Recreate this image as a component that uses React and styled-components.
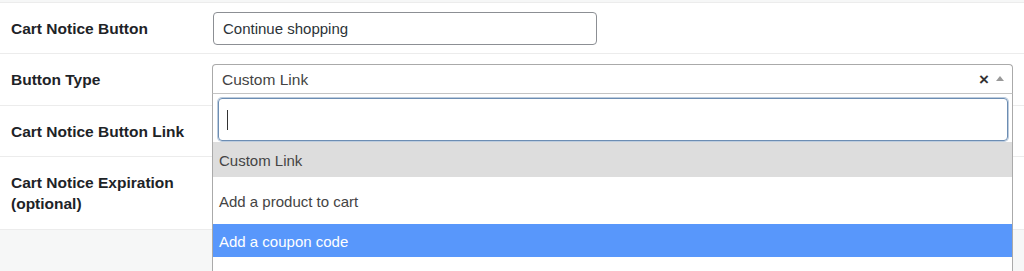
import React from "react";
import styled, { createGlobalStyle } from "styled-components";

const GlobalStyle = createGlobalStyle`
  html, body {
    margin: 0;
    padding: 0;
    background: #f6f7f7;
    overflow: hidden;
  }
  body {
    font-family: "Liberation Sans", Arial, sans-serif;
    color: #1d2327;
  }
`;

const options = [
  { label: "Custom Link", state: "selected", height: 35 },
  { label: "Add a product to cart", state: "", height: 47 },
  { label: "Add a coupon code", state: "highlighted", height: 33 },
];

const App = () => {
  return (
    <>
      <GlobalStyle />
      <Page>
        <FormTable>
          <Row>
            <Label>Cart Notice Button</Label>
            <Field $pad="9px 0 8px">
              <TextInput readOnly value="Continue shopping" />
            </Field>
          </Row>
          <Row $raised>
            <Label>Button Type</Label>
            <Field $pad="10px 0 11px">
              <SelectWrap>
                <Select>
                  <SelectValue>Custom Link</SelectValue>
                  <Clear>×</Clear>
                  <Arrow />
                </Select>
                <Dropdown>
                  <SearchWrap>
                    <SearchField>
                      <Caret />
                    </SearchField>
                  </SearchWrap>
                  <OptionList>
                    {options.map((o) => (
                      <Option key={o.label} $state={o.state} $h={o.height}>
                        {o.label}
                      </Option>
                    ))}
                  </OptionList>
                </Dropdown>
              </SelectWrap>
            </Field>
          </Row>
          <Row>
            <Label>Cart Notice Button Link</Label>
            <Field $pad="0" $min="50px" />
          </Row>
          <Row>
            <Label>
              Cart Notice Expiration
              <br />
              (optional)
            </Label>
            <Field $pad="0" $min="72px" />
          </Row>
        </FormTable>
      </Page>
    </>
  );
};

const Page = styled.div`
  padding-top: 2px;
  height: 269px;
  overflow: hidden;
`;

const FormTable = styled.div`
  background: #fff;
  border-top: 1px solid #ececec;
`;

const Row = styled.div`
  display: grid;
  grid-template-columns: 212px 1fr;
  border-bottom: 1px solid #ececec;
  position: relative;
  z-index: ${(p) => (p.$raised ? 2 : 1)};
`;

const Label = styled.div`
  padding: 15px 10px 0 11px;
  font-size: 15.5px;
  line-height: 21px;
  font-weight: 700;
  color: #1d2327;
`;

const Field = styled.div`
  padding: ${(p) => p.$pad};
  min-height: ${(p) => p.$min || "auto"};
  padding-right: 11px;
`;

const TextInput = styled.input`
  box-sizing: border-box;
  width: 384px;
  height: 33px;
  margin-left: 1px;
  padding: 0 9px;
  border: 1px solid #8c8f94;
  border-radius: 4px;
  background: #fff;
  font-family: "Liberation Sans", Arial, sans-serif;
  font-size: 15px;
  color: #2c3338;
  outline: none;
  display: block;
`;

const SelectWrap = styled.div`
  position: relative;
`;

const Select = styled.div`
  box-sizing: border-box;
  height: 30px;
  display: flex;
  align-items: center;
  padding: 1px 8px 0 9px;
  border: 1px solid #aaa;
  border-bottom-color: #c4c4c4;
  border-radius: 4px 4px 0 0;
  background: #fff;
`;

const SelectValue = styled.span`
  flex: 1;
  font-size: 15.5px;
  color: #444;
`;

const Clear = styled.span`
  font-size: 17px;
  font-weight: 700;
  color: #333;
  margin-right: 7px;
  line-height: 1;
`;

const Arrow = styled.span`
  width: 0;
  height: 0;
  border-left: 4px solid transparent;
  border-right: 4px solid transparent;
  border-bottom: 5px solid #999;
  margin-bottom: 2px;
`;

const Dropdown = styled.div`
  position: absolute;
  top: 100%;
  left: 0;
  right: 0;
  background: #fff;
  border: 1px solid #aaa;
  border-top: none;
  min-height: 190px;
`;

const SearchWrap = styled.div`
  padding: 4px 4px 1px 5px;
`;

const SearchField = styled.div`
  box-sizing: border-box;
  height: 43px;
  border: 1px solid #6c8db3;
  box-shadow: 0 0 0 1px rgba(108, 141, 179, 0.45);
  border-radius: 4px;
  display: flex;
  align-items: center;
  padding-left: 8px;
`;

const Caret = styled.span`
  width: 1px;
  height: 20px;
  background: #333;
`;

const OptionList = styled.div`
  display: flex;
  flex-direction: column;
`;

const Option = styled.div`
  height: ${(p) => p.$h}px;
  display: flex;
  align-items: center;
  padding: 2px 0 0 6px;
  box-sizing: border-box;
  font-size: 15px;
  color: ${(p) => (p.$state === "highlighted" ? "#fff" : "#444")};
  background: ${(p) =>
    p.$state === "highlighted"
      ? "#5897fb"
      : p.$state === "selected"
      ? "#ddd"
      : "#fff"};
`;

export default App;
